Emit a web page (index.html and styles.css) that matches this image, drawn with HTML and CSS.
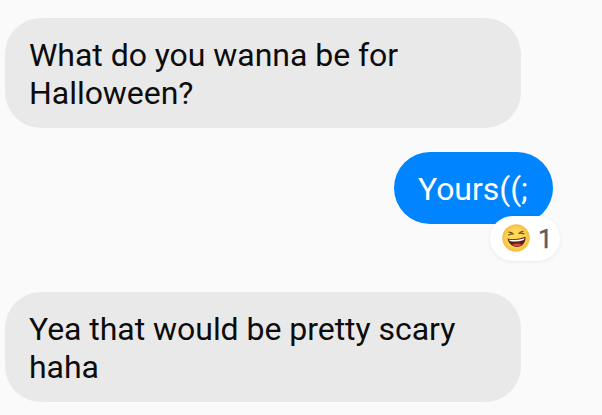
FILE: index.html
```html
<!DOCTYPE html>
<html lang="en">
<head>
<meta charset="utf-8">
<title>Chat</title>
<link rel="stylesheet" href="styles.css">
</head>
<body>
<main class="thread">
  <div class="bubble received"><span class="line">What do you wanna be for</span><span class="line">Halloween?</span></div>
  <div class="bubble sent"><span class="line">Yours((;</span>
    <div class="reaction">
      <svg class="emoji" viewBox="0 0 28 28">
        <defs><radialGradient id="face"><stop offset=".6" stop-color="#ffd955"/><stop offset="1" stop-color="#f5bb43"/></radialGradient></defs>
        <circle cx="14" cy="14" r="13.7" fill="url(#face)"/>
        <path d="M5.500 14.500Q14 16.500 23.500 12.800C24 18.500 20 23 15 23S6.500 19.500 5.500 14.500Z" fill="#5c2018"/>
        <path d="M7 15.500Q14.500 17 22.500 14.200L21.800 16Q14.500 18.500 7.800 17Z" fill="#fff"/>
        <path d="M10 21Q15 18.500 20 20.500Q15.500 24 10 21Z" fill="#dc4636"/>
        <path d="M7 8.200Q9.500 8.200 11.200 10Q9 9.700 6.800 11M21 7.300Q18.500 7.600 17 9.400Q19.500 8.800 21.800 9.900" fill="none" stroke="#765021" stroke-width="1.300" stroke-linecap="round" stroke-linejoin="round"/>
      </svg>
      <span class="count">1</span>
    </div>
  </div>
  <div class="bubble received"><span class="line">Yea that would be pretty scary</span><span class="line">haha</span></div>
</main>
</body>
</html>
```

FILE: styles.css
```css
body { margin: 0; background: #fafafa; font-family: Roboto, sans-serif; }
.thread { box-sizing: border-box; height: 415px; padding: 18px 0 0 5px; display: flex; flex-direction: column; overflow: hidden; }
.bubble { box-sizing: border-box; font-size: 32px; line-height: 38px; letter-spacing: -.04px; border-radius: 36px; }
.line { display: block; width: max-content; white-space: nowrap; }
.received { width: 516px; height: 110px; padding: 18px 24px; background: #e9e9e9; color: #0c0c0c; }
.sent { position: relative; align-self: flex-end; width: 159px; height: 72px; margin: 24px 49px 68px 0; padding: 18px 24px; background: #0084ff; color: #fff; }
.reaction { position: absolute; left: 96px; top: 64px; width: 70px; height: 45px; box-sizing: border-box; padding-left: 12px; border-radius: 23px; background: #fff; display: flex; align-items: center; gap: 8px; box-shadow: 0 1px 4px #00000012; }
.emoji { width: 28px; height: 28px; margin-top: -1px; }
.count { color: #5c5c5c; font-size: 26px; line-height: 30px; padding-top: 1px; -webkit-text-stroke: .4px #5c5c5c; }
```
